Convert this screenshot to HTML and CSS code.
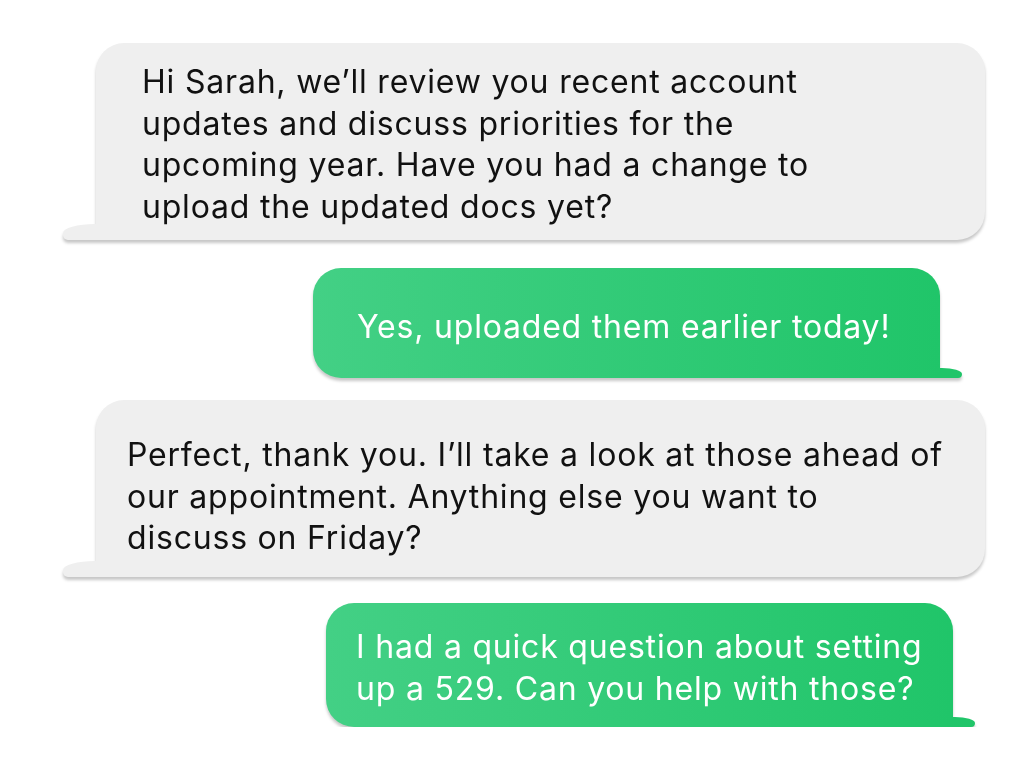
FILE: index.html
```html
<!DOCTYPE html>
<html lang="en">
<head>
    <meta charset="UTF-8">
    <meta name="viewport" content="width=device-width, initial-scale=1.0">
    <title>Chat</title>
    <link rel="stylesheet" href="styles.css">
</head>
<body>
    <div class="chat">
        <div class="bubble incoming first">
            Hi Sarah, we’ll review you recent account<br>
            updates and discuss priorities for the<br>
            upcoming year. Have you had a change to<br>
            upload the updated docs yet?
        </div>
        <div class="bubble outgoing second">
            Yes, uploaded them earlier today!
        </div>
        <div class="bubble incoming third">
            Perfect, thank you. I’ll take a look at those ahead of<br>
            our appointment. Anything else you want to<br>
            discuss on Friday?
        </div>
        <div class="bubble outgoing fourth">
            I had a quick question about setting<br>
            up a 529. Can you help with those?
        </div>
    </div>
</body>
</html>
```

FILE: styles.css
```css
body {
    margin: 0;
    background: #fff;
    font-family: Inter, "Noto Sans", sans-serif;
}
.chat {
    display: flex;
    flex-direction: column;
    padding-top: 43px;
}
.bubble {
    position: relative;
    box-sizing: border-box;
    font-size: 32px;
    line-height: 41.6px;
    letter-spacing: 0.8px;
    border-radius: 28px;
    filter: drop-shadow(0 3px 1.5px rgba(0, 0, 0, 0.22));
}
/* little tail at the bottom corner */
.bubble::after {
    content: "";
    position: absolute;
    bottom: 0;
}
.incoming {
    align-self: flex-start;
    margin-left: 96px;
    width: 889px;
    background: #efefef;
    color: #111;
    border-bottom-left-radius: 0;
}
.incoming::after {
    left: -33px;
    width: 34px;
    height: 16px;
    background: #efefef;
    border-top-left-radius: 32px 9px;
    border-bottom-left-radius: 5px;
}
.outgoing {
    align-self: flex-start;
    color: #fff;
    background: linear-gradient(90deg, #43d085, #20c569);
    border-bottom-right-radius: 0;
}
.outgoing::after {
    right: -22px;
    width: 23px;
    height: 10px;
    background: #20c569;
    border-top-right-radius: 20px 6px;
    border-bottom-right-radius: 4px;
}
.first {
    padding: 18px 20px 12px 46px;
    height: 197px;
}
.second {
    margin-top: 28px;
    margin-left: 313px;
    width: 627px;
    height: 110px;
    padding: 38px 20px 0 44px;
}
.third {
    margin-top: 22px;
    height: 177px;
    padding: 34px 20px 0 31px;
}
.fourth {
    margin-top: 26px;
    margin-left: 326px;
    width: 627px;
    height: 124px;
    padding: 23px 20px 0 30px;
}
```
